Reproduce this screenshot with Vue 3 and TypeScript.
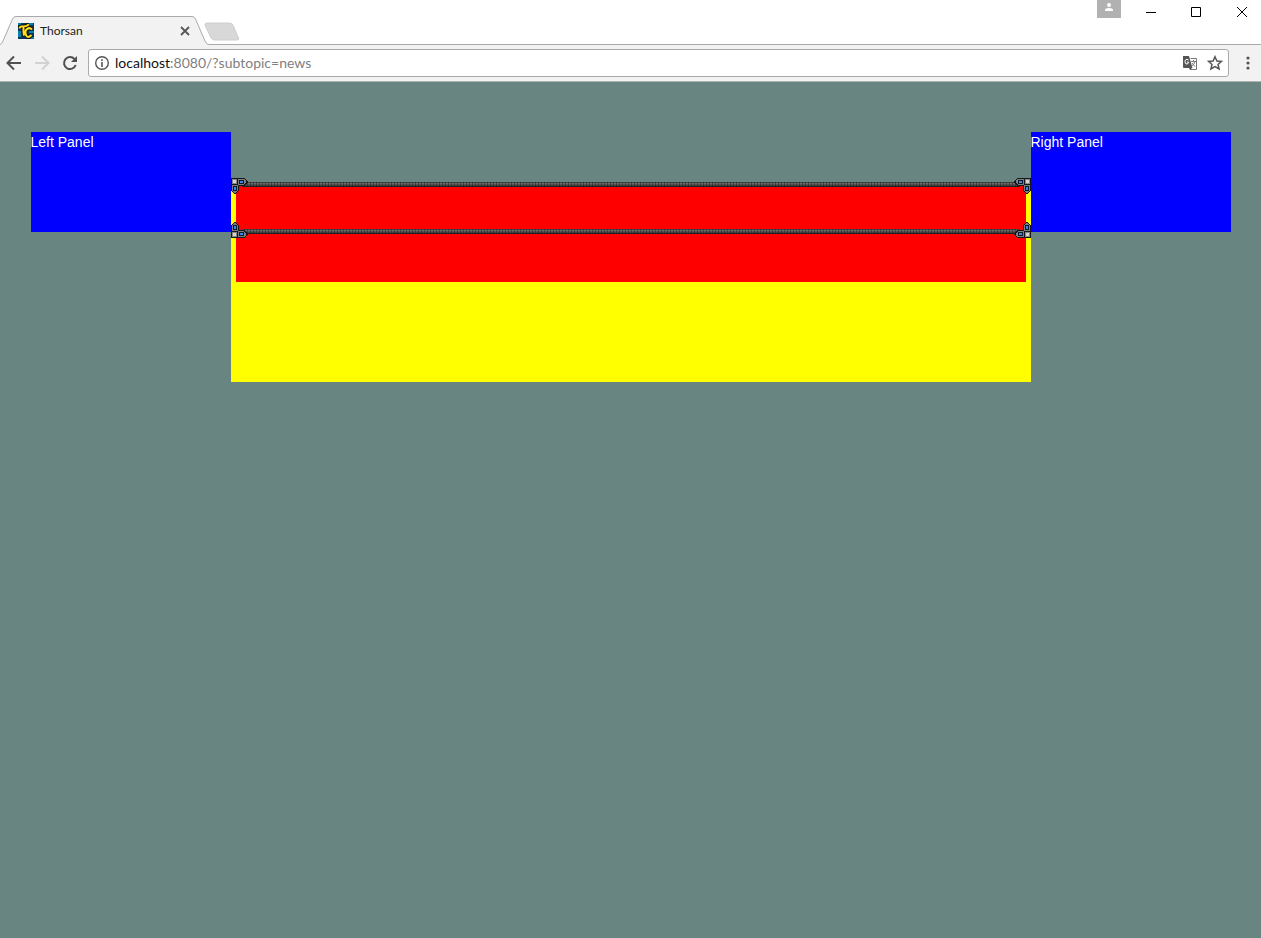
<script setup lang="ts">
import { ref } from 'vue'

const title = 'Thorsan'
const address = ref('localhost:8080/?subtopic=news')
const corners: string[] = ['tl', 'tr', 'bl', 'br']
</script>

<template>
  <div class="window">
    <header class="titlebar">
      <div class="tab">
        <svg class="tab-shape" width="209" height="29" viewBox="0 1 209 29" aria-hidden="true">
          <path d="M0 29.5C2 28.5 2.500 27.500 3 26L12.500 4Q13.500 1.500 16 1.500H192Q194.500 1.500 195.500 4L205 26Q206.500 29.500 209 29.500V30H0Z" fill="#f2f2f2" />
          <path d="M0 29.500Q2 29 3 26L12.500 4Q13.500 1.500 16 1.500H192Q194.500 1.500 195.500 4L205 26Q206.500 29.500 209 29.500" fill="none" stroke="#aaa" />
        </svg>
        <svg class="favicon" width="16" height="16" viewBox="0 0 16 16" aria-hidden="true">
          <path fill="#07365a" d="M0 0h16v16H0z" />
          <path fill="#087fa9" d="M0 0h3v2H0zM11 0h4v2h-4zM0 8h3v6H0zM11 8h5v2h-5zM13 14h3v2h-3z" />
          <path d="M1.500 5.500Q2 3 4.500 3.500T11 1.500M5.500 4V9Q5.500 12 6.500 12.500M14 6.500Q11.500 4 9 6T8 12T13.500 12" fill="none" stroke="#101010" stroke-width="4" />
          <path d="M1.500 5.500Q2 3 4.500 3.500T11 1.500M5.500 4V9Q5.500 12 6.500 12.500M14 6.500Q11.500 4 9 6T8 12T13.500 12" fill="none" stroke="#ffe01c" stroke-width="2" />
        </svg>
        <span class="tab-title">{{ title }}</span>
        <button class="plain close-tab" aria-label="Close tab">
          <svg width="10" height="10" viewBox="0 0 10 10"><path d="M1 1l8 8M9 1L1 9" stroke="#555" stroke-width="1.800" /></svg>
        </button>
      </div>
      <button class="plain new-tab" aria-label="New tab">
        <svg width="36" height="19" viewBox="0 0 36 19"><path d="M3 1H25Q28 1 29 3L34.500 16Q35 18 33 18H11Q8 18 7 16L1 3Q.5 1 3 1Z" fill="#d8d8d8" stroke="#cecece" /></svg>
      </button>
      <div class="window-controls">
        <button class="plain user" aria-label="User">
          <svg width="24" height="18" viewBox="0 0 24 18"><circle cx="12" cy="5" r="2" fill="#fff" /><path d="M8 11V10Q8 8 12 8T16 10V11Z" fill="#fff" /></svg>
        </button>
        <button class="plain control" aria-label="Minimize"><svg width="12" height="12" viewBox="0 0 12 12"><path d="M1 6.500H11" stroke="#000" /></svg></button>
        <button class="plain control" aria-label="Maximize"><svg width="12" height="12" viewBox="0 0 12 12"><path d="M1.500 1.500h9v9h-9z" fill="none" stroke="#000" /></svg></button>
        <button class="plain control" aria-label="Close"><svg width="12" height="12" viewBox="0 0 12 12"><path d="M1 1l10 10M11 1L1 11" stroke="#000" /></svg></button>
      </div>
    </header>

    <nav class="toolbar" aria-label="Browser">
      <button class="plain tool" aria-label="Back"><svg width="16" height="16" viewBox="0 0 16 16"><path d="M15 8H2M8 1.500L1.500 8L8 14.500" fill="none" stroke="#505050" stroke-width="2" /></svg></button>
      <button class="plain tool" aria-label="Forward" disabled><svg width="16" height="16" viewBox="0 0 16 16"><path d="M1 8H14M8 1.500L14.500 8L8 14.500" fill="none" stroke="#d2d2d2" stroke-width="2" /></svg></button>
      <button class="plain tool" aria-label="Reload"><svg width="16" height="16" viewBox="0 0 16 16"><path d="M13.700 10A6 6 0 1 1 12.500 4" fill="none" stroke="#505050" stroke-width="2" /><path d="M15 1V7H9Z" fill="#505050" /></svg></button>
      <div class="omnibox">
        <svg width="16" height="16" viewBox="0 0 16 16" aria-hidden="true"><circle cx="8" cy="8" r="6.300" fill="none" stroke="#555" stroke-width="1.400" /><path d="M7.200 4.300h1.600v1.600H7.200zM7.200 7h1.600v5H7.200z" fill="#555" /></svg>
        <label class="address">
          <span class="address-text" aria-hidden="true"><b>{{ address.split(':')[0] }}</b>{{ address.slice(address.split(':')[0].length) }}</span>
          <input v-model="address" type="text" aria-label="Address" spellcheck="false" />
        </label>
        <button class="plain page-action" aria-label="Translate this page">
          <svg width="16" height="16" viewBox="0 0 16 16"><path d="M8.500 3.500h6v11H8" fill="#fff" stroke="#777" /><path d="M1 1H7L10.500 13H2Q1 13 1 12ZM7 13H10L8 15Z" fill="#555" /><path d="M6.500 5Q5 3.500 3.500 5T4 9Q6.500 9.500 6.500 7H5" fill="none" stroke="#fff" /><path d="M9 6.500h5M11.500 5v1.500M13 7Q12 10 9.500 11M10 8l3 3.500" fill="none" stroke="#777" /></svg>
        </button>
        <button class="plain page-action" aria-label="Bookmark this page">
          <svg width="16" height="16" viewBox="0 0 16 16"><path d="M8 1.700L9.900 6L14.500 6.400L11 9.500L12.100 14L8 11.600L3.900 14L5 9.500L1.500 6.400L6.100 6Z" fill="none" stroke="#555" stroke-width="1.500" /></svg>
        </button>
      </div>
      <button class="plain menu" aria-label="Menu"><svg width="4" height="14" viewBox="0 0 4 14"><circle cx="2" cy="2" r="1.600" fill="#555" /><circle cx="2" cy="7" r="1.600" fill="#555" /><circle cx="2" cy="12" r="1.600" fill="#555" /></svg></button>
    </nav>

    <main class="page">
      <div class="columns">
        <aside class="panel">Left Panel</aside>
        <section class="content">
          <div class="news">
            <div class="headline">
              <svg v-for="corner in corners" :key="corner" class="corner" :class="corner" width="17" height="17" viewBox="0 0 17 17" shape-rendering="crispEdges" aria-hidden="true">
                <path d="M0 1H14V2H15V3H16V4H17V6H16V7H15V8H14V9H8V14H7V15H6V16H5V17H3V16H2V15H1V14H0Z" fill="#15171a" />
                <path d="M1 2H6V7H1Z" fill="#858585" /><path d="M2 3H5V6H2Z" fill="#d4d4cc" />
                <path d="M7 2H14V3H15V6H14V7H13V8H7Z" fill="#7b7d80" /><path d="M8 3H13V7H8Z" fill="#10192a" /><path d="M9 4H12V6H9Z" fill="#3c83e6" />
                <path d="M1 8H7V14H6V15H5V16H3V15H2V14H1Z" fill="#7b7d80" /><path d="M2 9H6V14H2Z" fill="#10192a" /><path d="M3 10H5V13H3Z" fill="#3c83e6" />
              </svg>
            </div>
          </div>
        </section>
        <aside class="panel">Right Panel</aside>
      </div>
    </main>
  </div>
</template>

<style>
body { margin: 0; background: #698582; }
</style>

<style scoped>
.window { min-height: 100vh; display: flex; flex-direction: column; background: #698582; }
.plain { padding: 0; border: 0; background: none; display: flex; align-items: center; justify-content: center; }
svg { display: block; flex: none; }
.titlebar { height: 45px; box-sizing: border-box; border-bottom: 1px solid #aaa; background: #fff; display: flex; align-items: flex-end; }
.tab { position: relative; width: 209px; height: 28px; box-sizing: border-box; padding: 2px 19px 0 18px; display: flex; align-items: center; }
.tab-shape { position: absolute; left: 0; top: 0; }
.favicon, .tab-title, .close-tab { position: relative; }
.tab-title { flex: 1; margin-left: 6px; font: 12px/16px Lato, "Noto Sans", sans-serif; color: #222; }
.close-tab { width: 10px; height: 16px; }
.new-tab { height: 26px; margin-left: -5px; align-items: flex-start; margin-bottom: -4px; }
.window-controls { display: flex; align-self: flex-start; margin-left: auto; }
.user { width: 24px; height: 18px; background: #b1b1b1; margin-right: 7px; }
.control { width: 45px; height: 24px; }
.control:last-child { width: 43px; padding-left: 5px; }
.toolbar { height: 37px; box-sizing: border-box; padding: 0 11px 0 6px; border-bottom: 1px solid #b3b3b3; background: #f2f2f2; display: flex; align-items: center; }
.tool { width: 16px; height: 28px; margin-right: 12px; }
.omnibox { flex: 1; min-width: 0; height: 28px; box-sizing: border-box; margin-left: -2px; padding: 0 5px; border: 1px solid #aaa; border-radius: 3px; background: #fff; display: flex; align-items: center; }
.address { position: relative; flex: 1; height: 20px; margin-left: 5px; font: 14px/20px Lato, "Noto Sans", sans-serif; }
.address-text { position: absolute; inset: 0; color: #808080; white-space: nowrap; overflow: hidden; pointer-events: none; }
.address-text b { font-weight: 400; color: #111; }
.address input { width: 100%; height: 20px; padding: 0; border: 0; outline: 0; background: transparent; font: inherit; color: transparent; caret-color: #111; }
.page-action { width: 16px; height: 20px; margin-left: 9px; }
.menu { width: 4px; height: 28px; margin-left: 17px; }
.page { flex: 1; padding-top: 50px; }
.columns { max-width: 1200px; margin: 0 auto; display: flex; align-items: flex-start; }
.panel { width: 200px; height: 100px; flex: none; background: #00f; color: #fff; font: 14px/20px "Liberation Sans", Arial, sans-serif; }
.content { flex: 1; min-width: 0; height: 200px; box-sizing: border-box; margin-top: 50px; padding: 0 5px; background: #ff0; }
.news { height: 100px; background: #f00; }
.headline { position: relative; height: 52px; }
.headline::before, .headline::after { content: ""; position: absolute; left: 6px; right: 6px; height: 5px; background: repeating-linear-gradient(90deg, #0000 0 2px, #1116 2px 3px), linear-gradient(#444 0 1px, #6b6b6b 1px 2px, #555 2px 3px, #444 3px 4px, #222 4px); }
.headline::before { top: 0; }
.headline::after { bottom: 0; }
.corner { position: absolute; z-index: 1; }
.tl { left: -5px; top: -5px; }
.tr { right: -5px; top: -5px; transform: scaleX(-1); }
.bl { left: -5px; bottom: -5px; transform: scaleY(-1); }
.br { right: -5px; bottom: -5px; transform: scale(-1); }
</style>
